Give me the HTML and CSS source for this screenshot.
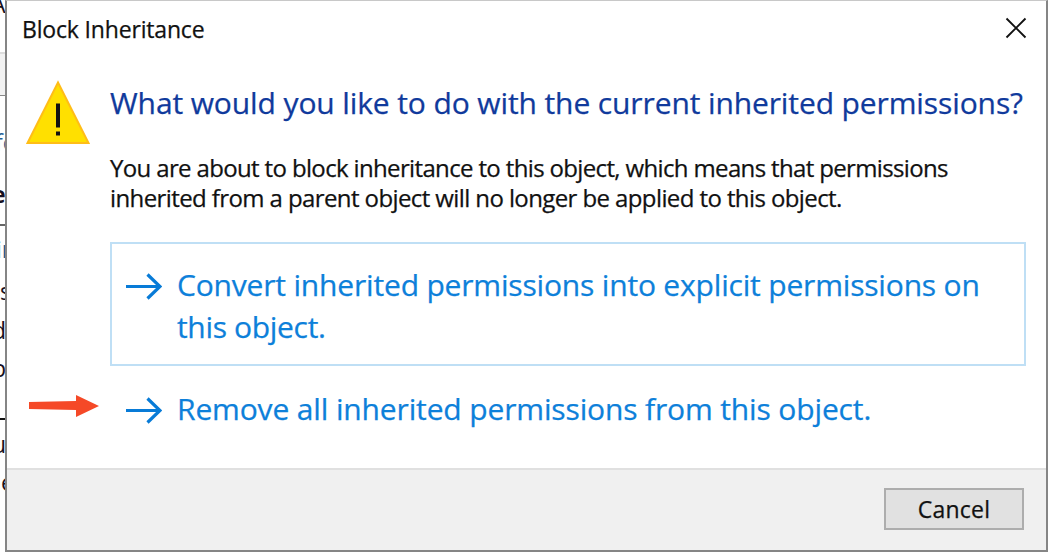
FILE: index.html
```html
<!DOCTYPE html>
<html lang="en">
<head>
<meta charset="utf-8">
<title>Block Inheritance</title>
<link rel="stylesheet" href="styles.css">
</head>
<body>
<div class="desktop">
  <svg class="backdrop" width="1048" height="554" viewBox="0 0 1048 554" aria-hidden="true">
    <rect y="53" width="6" height="42" fill="#f2f2f2"/>
    <path d="M0 53h6" stroke="#ddd" stroke-width="2"/>
    <path d="M0 95.500h6" stroke="#888"/>
    <path d="M0 225h6" stroke="#666" stroke-width="2"/>
    <path d="M0 419h6" stroke="#111" stroke-width="2"/>
    <g class="backdrop-text">
      <text x="-9" y="13">A</text>
      <text x="-5" y="151" fill="#245c94">fe</text>
      <text x="-8" y="203" font-weight="bold">e</text>
      <text x="-4" y="258" fill="#245c94">in</text>
      <text x="0" y="300">s</text>
      <text x="-8" y="339">d</text>
      <text x="-8" y="377">p</text>
      <text x="-8" y="453">u</text>
      <text x="1" y="491">e</text>
    </g>
  </svg>
  <main class="dialog">
    <header class="titlebar">
      <span class="title">Block Inheritance</span>
      <svg class="close" width="22" height="22" viewBox="0 0 22 22"><path d="M1.500 1.500l19 19M20.500 1.500l-19 19" stroke="#111" stroke-width="1.900"/></svg>
    </header>
    <section class="content">
      <svg class="warning" width="66" height="66" viewBox="0 0 66 66">
        <path d="M33 3.500L63.500 64H2.500Z" fill="#ffe000" stroke="#ffbd18" stroke-width="2"/>
        <path d="M31 24.500h4v24h-4zM31 52.500h4v4h-4z" fill="#111"/>
      </svg>
      <div class="copy">
        <h1 class="heading">What would you like to do with the current inherited permissions?</h1>
        <p class="body"><span class="line body-first">You are about to block inheritance to this object, which means that permissions</span><span class="line body-second">inherited from a parent object will no longer be applied to this object.</span></p>
        <div class="option option-focus">
          <svg class="arrow" width="36" height="28" viewBox="0 0 36 28"><path d="M0 14.500h34M21.500 2.500l12.500 12l-12.500 12" fill="none" stroke="#087bd7" stroke-width="3.200"/></svg>
          <span class="label"><span class="line convert-first">Convert inherited permissions into explicit permissions on</span><span class="line convert-second">this object.</span></span>
        </div>
        <div class="option option-remove">
          <svg class="arrow" width="36" height="28" viewBox="0 0 36 28"><path d="M0 14.500h34M21.500 2.500l12.500 12l-12.500 12" fill="none" stroke="#087bd7" stroke-width="3.200"/></svg>
          <span class="label"><span class="line remove">Remove all inherited permissions from this object.</span></span>
        </div>
      </div>
      <svg class="pointer" width="72" height="24" viewBox="0 0 72 24"><path d="M1 8L48 7V1L71 12L48 23V16L1 15Z" fill="#f54927"/></svg>
    </section>
    <footer class="footer"><button class="cancel">Cancel</button></footer>
  </main>
</div>
</body>
</html>
```
FILE: styles.css
```css
* { box-sizing: border-box; }
body { margin: 0; background: #fff; font-family: "Open Sans", "Noto Sans", sans-serif; overflow: hidden; }
.desktop { position: relative; width: 1048px; height: 554px; padding-left: 5px; }
.backdrop { position: absolute; left: 0; top: 0; }
.backdrop-text { font-size: 23px; fill: #171020; }
.dialog { position: relative; width: 1043px; height: 552px; background: #fff; border: 2px solid #858585; border-top: 1px solid #c8c8c8; display: flex; flex-direction: column; -webkit-text-stroke-width: .25px; }
.titlebar { height: 59px; display: flex; justify-content: space-between; padding: 11px 19px 0 15px; }
.title { font-size: 23px; line-height: 34px; color: #111; white-space: nowrap; letter-spacing: -.17px; }
.close { margin-top: 5px; }
.content { position: relative; flex: 1; display: flex; padding: 19px 20px 0 18px; }
.warning { flex: none; }
.copy { width: 916px; flex: none; margin-left: 19px; }
.heading { margin: 0; font-size: 30px; line-height: 48px; font-weight: 400; color: #103a9c; white-space: nowrap; letter-spacing: -.11px; }
.body { margin: 26px 0 29px; font-size: 24px; line-height: 30px; color: #111; }
.line { display: block; width: max-content; white-space: nowrap; }
.body-first { letter-spacing: -.645px; }
.body-second { letter-spacing: -.6px; }
.option { display: flex; padding: 20px 14px; color: #0d80da; font-size: 30px; line-height: 42px; border: 2px solid transparent; }
.option-focus { border-color: #bfdff5; height: 124px; }
.arrow { flex: none; margin-top: 8px; }
.label { margin-left: 15px; }
.convert-first { letter-spacing: -.18px; }
.convert-second { letter-spacing: -.33px; }
.remove { letter-spacing: -.14px; }
.pointer { position: absolute; left: 21px; top: 334px; }
.footer { height: 82px; background: #f0f0f0; border-top: 2px solid #e0e0e0; display: flex; justify-content: flex-end; padding: 18px 22px 0; }
.cancel { width: 140px; height: 42px; padding: 0; border: 2px solid #adadad; background: #e1e1e1; color: #111; font: 23px/34px "Open Sans", "Noto Sans", sans-serif; letter-spacing: .2px; -webkit-text-stroke-width: .25px; }
```
